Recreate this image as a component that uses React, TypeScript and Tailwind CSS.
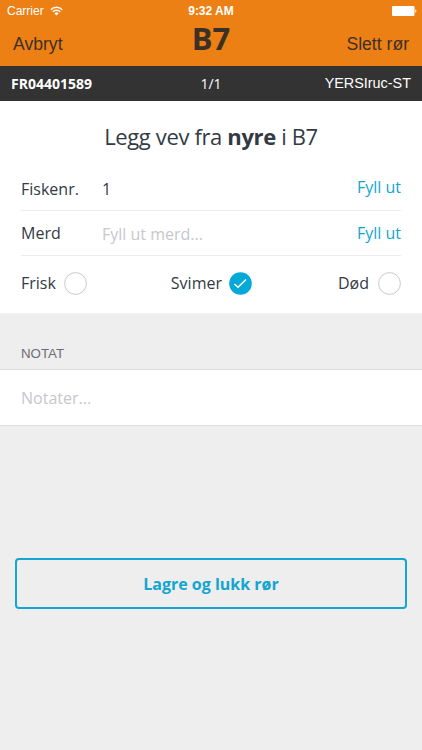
import React, { useState } from "react";

const STATES = ["Frisk", "Svimer", "Død"];

function WifiIcon() {
  return (
    <svg width="13" height="10" viewBox="0 0 13 10" fill="none" stroke="#fff">
      <path d="M0.8 3.7a8.1 8.1 0 0 1 11.4 0" strokeWidth="1.5" />
      <path d="M2.8 5.8a5.2 5.2 0 0 1 7.4 0" strokeWidth="1.5" />
      <path d="M6.5 9.5L4.4 7.4a3 3 0 0 1 4.2 0z" fill="#fff" stroke="none" />
    </svg>
  );
}

function BatteryIcon() {
  return (
    <svg width="25" height="10" viewBox="0 0 25 10" fill="#fff">
      <rect x="0" y="0" width="22.5" height="10" rx="1" />
      <path d="M23.2 3.3c1.6 0.4 1.6 3 0 3.4z" />
    </svg>
  );
}

interface RadioProps {
  label: string;
  checked: boolean;
  onSelect: () => void;
}

function Radio({ label, checked, onSelect }: RadioProps) {
  return (
    <button
      onClick={onSelect}
      className={`flex items-center ${
        label === "Svimer" ? "mr-0.5 gap-[7px]" : label === "Frisk" ? "gap-2" : "gap-[9px]"
      }`}
    >
      <span className="-mt-px">{label}</span>
      {checked ? (
        <svg width="23" height="23" viewBox="0 0 23 23" fill="none">
          <circle cx="11.5" cy="11.5" r="11.3" fill="#05a9d8" />
          <path d="M5.4 11.9l3.6 3.4 8-7.9" stroke="#fff" strokeWidth="1.4" />
        </svg>
      ) : (
        <svg width="23" height="23" viewBox="0 0 23 23" fill="none">
          <circle cx="11.5" cy="11.5" r="10.9" fill="#fff" stroke="#c8c8c8" />
        </svg>
      )}
    </button>
  );
}

export default function App() {
  const [state, setState] = useState("Svimer");

  return (
    <div className="flex h-[750px] w-[422px] flex-col overflow-hidden bg-[#eeeeee] font-['Open_Sans',sans-serif] text-base text-[#333a44]">
      {/* Status bar and navigation */}
      <header className="h-[66px] shrink-0 bg-[#ed8014]">
        <div className="grid h-[22px] grid-cols-3 items-center pr-[5px] pl-[7px] font-['Liberation_Sans',sans-serif] text-xs text-white">
          <div className="flex items-center gap-[6px]">
            <span>Carrier</span>
            <WifiIcon />
          </div>
          <span className="pr-0.5 text-center text-xs font-bold">9:32 AM</span>
          <div className="flex justify-end">
            <BatteryIcon />
          </div>
        </div>
        <div className="grid h-[44px] grid-cols-3 px-[13px] font-['Liberation_Sans',sans-serif] text-[17.6px] text-[#3b3026]">
          <button className="self-center text-left">Avbryt</button>
          <h1 className="text-center font-['Open_Sans',sans-serif] text-[31px] leading-[32px] font-bold">
            B7
          </h1>
          <button className="self-center text-right">Slett rør</button>
        </div>
      </header>

      <div className="grid h-[35px] shrink-0 grid-cols-3 items-center bg-[#333333] px-[11px] text-sm text-white">
        <span className="font-bold">FR04401589</span>
        <span className="text-center">1/1</span>
        <span className="text-right font-['Liberation_Sans',sans-serif] text-[14.4px]">YERSIruc-ST</span>
      </div>

      <main>
        {/* Sample form */}
        <section className="h-[212px] bg-white px-[21px]">
          <h2 className="h-[65px] pt-[19px] text-center text-[22px] leading-[32px] tracking-[-0.36px]">
            Legg vev fra <b>nyre</b> i B7
          </h2>
          <div className="flex h-[45px] items-center border-b border-[#ececec]">
            <span className="w-[81px] pt-px">Fiskenr.</span>
            <span className="flex-1 pt-px">1</span>
            <button className="pb-[3px] text-[#12a6d0]">Fyll ut</button>
          </div>
          <div className="flex h-[45px] items-center border-b border-[#ececec]">
            <span className="w-[81px]">Merd</span>
            <span className="flex-1 pt-[2px] text-[#c7c7cc]">Fyll ut merd...</span>
            <button className="text-[#12a6d0]">Fyll ut</button>
          </div>
          <div className="flex h-[55px] items-center justify-between">
            {STATES.map((s) => (
              <Radio key={s} label={s} checked={s === state} onSelect={() => setState(s)} />
            ))}
          </div>
        </section>

        {/* Notes */}
        <h3 className="h-[56px] px-[21px] pt-[31px] font-['Liberation_Sans',sans-serif] text-[13.3px] leading-[20px] text-[#6d6d72]">
          NOTAT
        </h3>
        <div className="flex h-[57px] items-center border-y border-[#dfdfdf] bg-white px-[21px] text-[#c7c7cc]">
          Notater...
        </div>

        <div className="px-[15px] pt-[132px]">
          <button className="h-[51px] w-full rounded border-2 border-[#12a6d0] font-bold text-[#12a6d0]">
            Lagre og lukk rør
          </button>
        </div>
      </main>
    </div>
  );
}
